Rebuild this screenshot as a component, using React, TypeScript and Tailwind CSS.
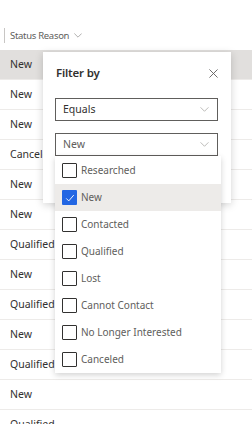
import React from "react";

const rows = [
  "New",
  "New",
  "New",
  "Canceled",
  "New",
  "New",
  "Qualified",
  "New",
  "Qualified",
  "New",
  "Qualified",
  "New",
  "Qualified",
];

const options = [
  "Researched",
  "New",
  "Contacted",
  "Qualified",
  "Lost",
  "Cannot Contact",
  "No Longer Interested",
  "Canceled",
];

function Chevron({ className }: { className?: string }) {
  return (
    <svg viewBox="0 0 12 7" className={className} fill="none">
      <path d="M0.5 0.5 L6 6 L11.5 0.5" stroke="currentColor" strokeWidth="1" />
    </svg>
  );
}

export default function App() {
  return (
    <div
      className="relative w-[252px] h-[424px] overflow-hidden bg-white text-[#323130]"
      style={{ fontFamily: '"Noto Sans", "Open Sans", sans-serif' }}
    >
      {/* header */}
      <div className="h-[50px] flex items-start pt-[28px] pl-[4px]">
        <span className="block h-[15px] border-l border-[#c8c6c4]" />
        <span className="ml-[5px] text-[9.5px] leading-[15px] tracking-[-0.3px] text-[#605e5c]">Status Reason</span>
        <Chevron className="ml-[5px] mt-[5px] w-[8px] h-[5px] text-[#8a8886]" />
      </div>
      {/* rows */}
      <div className="flex flex-col">
        {rows.map((r, i) => (
          <div
            key={i}
            className={`h-[30px] shrink-0 flex items-center pl-[10px] text-[10.5px] border-b border-[#edebe9] ${
              i === 0 ? "bg-[#e1dfdd]" : "bg-white"
            }`}
          >
            {r}
          </div>
        ))}
      </div>

      {/* filter popup */}
      <div className="absolute left-[43px] top-[52px] w-[188px] h-[151px] bg-white shadow-[0_2px_8px_rgba(0,0,0,0.18)]">
        <div className="flex items-center justify-between pl-[13px] pr-[13px] pt-[12px]">
          <span className="text-[11.5px] leading-[18px] font-semibold tracking-[-0.2px] text-[#323130]">Filter by</span>
          <svg viewBox="0 0 10 10" className="w-[9px] h-[9px] text-[#605e5c]">
            <path d="M0.5 0.5 L9.5 9.5 M9.5 0.5 L0.5 9.5" stroke="currentColor" strokeWidth="1" />
          </svg>
        </div>
        <div className="ml-[12px] mt-[16px] w-[163px] h-[23px] border border-[#605e5c] flex items-center justify-between pl-[7px] pr-[8px]">
          <span className="text-[10.5px] text-[#323130]">Equals</span>
          <Chevron className="w-[9px] h-[5px] text-[#a19f9d]" />
        </div>
        <div className="relative ml-[12px] mt-[12px] w-[163px] h-[23px] border border-[#605e5c] flex items-center justify-between pl-[7px] pr-[8px]">
          <span className="text-[10.5px] text-[#605e5c]">New</span>
          <Chevron className="w-[9px] h-[5px] text-[#a19f9d]" />
          {/* options list */}
          <div className="absolute left-[-1px] top-[22px] w-[166px] bg-white shadow-[0_2px_6px_rgba(0,0,0,0.18)] flex flex-col pt-[1px]">
            {options.map((o) => {
              const checked = o === "New";
              return (
                <div
                  key={o}
                  className={`h-[27px] flex items-center pl-[7px] ${checked ? "bg-[#edebe9]" : "bg-white"}`}
                >
                  {checked ? (
                    <span className="w-[15px] h-[15px] bg-[#2266e3] flex items-center justify-center rounded-[1px]">
                      <svg viewBox="0 0 12 12" className="w-[10px] h-[10px]">
                        <path d="M1.5 6.5 L4.5 9.5 L10.5 2.5" stroke="white" strokeWidth="1.1" fill="none" />
                      </svg>
                    </span>
                  ) : (
                    <span className="w-[15px] h-[15px] border border-[#323130] rounded-[1px]" />
                  )}
                  <span className="ml-[4px] text-[10px] text-[#605e5c]">{o}</span>
                </div>
              );
            })}
          </div>
        </div>
      </div>
    </div>
  );
}
